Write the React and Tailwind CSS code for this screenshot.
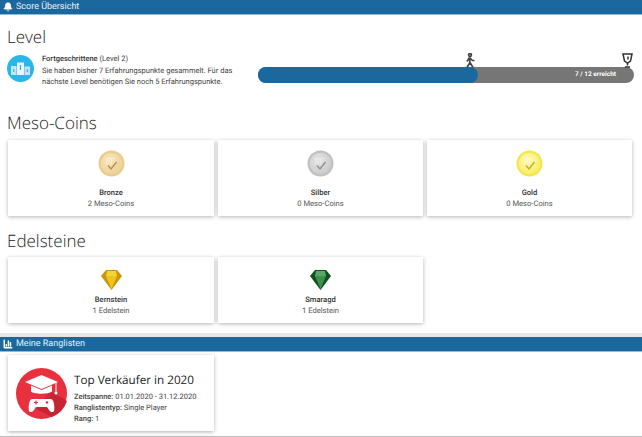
import { Bell, BarChart3 } from 'lucide-react';

const font = "font-['Roboto',sans-serif] [text-rendering:geometricPrecision]";
const heading = "font-['Open_Sans',sans-serif] text-[17px] leading-[26px] font-light text-[#222]";

function SectionBar({ icon, title }) {
  return (
    <div className="h-[15px] flex items-center gap-[3px] pl-[3px] bg-[#1b689f] border-b border-[#8fbbd8] text-[#e8f0f6] text-[9px] leading-none">
      {icon}
      <span className="pt-[1px]">{title}</span>
    </div>
  );
}

function Coin({ from, to, edge, check }) {
  return (
    <svg width="27" height="27" viewBox="0 0 27 27">
      <defs>
        <radialGradient id={`coin-${edge}`} cx="40%" cy="35%" r="75%">
          <stop offset="0%" stopColor={from} />
          <stop offset="100%" stopColor={to} />
        </radialGradient>
      </defs>
      <circle cx="13.500" cy="13.500" r="13" fill={edge} />
      <circle cx="13.500" cy="13.500" r="10.800" fill={`url(#coin-${edge})`} />
      <path d="M8 8.500h9M8.500 8.500v6M11 8.500v6M13.500 8.500v6M16 8.500v6" stroke="#fff" strokeOpacity="0.4" strokeWidth="0.800" fill="none" />
      <path d="M10 15.500l3 3.500 5.500-7" stroke={check} strokeWidth="1.400" fill="none" />
    </svg>
  );
}

function Gem({ light, mid, dark }) {
  return (
    <svg width="21" height="20" viewBox="0 0 21 20">
      <path d="M5 0h11l5 6-10.500 14L0 6z" fill={dark} />
      <path d="M5 6h11l-5.500 13z" fill={mid} />
      <path d="M6 1h9l1 5H5z" fill={light} />
    </svg>
  );
}

function Card({ icon, name, value, h, iconH, gap }) {
  return (
    <div className={`${h} bg-white shadow-[0_1px_4px_rgba(0,0,0,0.3)] flex flex-col items-center`}>
      <div className={`${iconH} flex items-end justify-center`}>{icon}</div>
      <div className={`${gap} text-[7.600px] leading-[11px] font-medium text-[#333]`}>{name}</div>
      <div className="text-[7.600px] leading-[11px] text-[#555]">{value}</div>
    </div>
  );
}

function Walker() {
  return (
    <svg width="10" height="15" viewBox="0 0 10 15" fill="none" stroke="#444" strokeWidth="1.700">
      <circle cx="5" cy="2" r="1.400" />
      <path d="M4.500 4.500L2 8.500M4.500 4.500l3 3h2M4.500 4.500l.5 5-3 5M5 9.500l3 5" />
    </svg>
  );
}

function Trophy() {
  return (
    <svg width="11" height="15" viewBox="0 0 11 15" fill="none" stroke="#333" strokeWidth="1.500">
      <path d="M1 1h9l-1.500 7-3 2-3-2z" />
      <path d="M6 3.500v3" />
      <path d="M5.500 10v2.500M3 14h5" />
    </svg>
  );
}

function Podium() {
  return (
    <svg width="27" height="27" viewBox="0 0 27 27">
      <circle cx="13.500" cy="13.500" r="13.500" fill="#29b6e8" />
      <path d="M10 7.500h7V20h-7z" fill="#e9f7fc" />
      <path d="M4 11h5.500v9H4zM17.500 11.500H23V20h-5.500z" fill="#bfe8f7" />
      <path d="M13.500 10v5M6.700 14v3M20.300 14v3" stroke="#29b6e8" strokeWidth="1.200" />
    </svg>
  );
}

function GameBadge() {
  return (
    <svg width="51" height="51" viewBox="0 0 51 51">
      <circle cx="25.500" cy="25.500" r="25.500" fill="#e8303f" />
      <path d="M34 23l17 10a25.500 25.500 0 0 1-15 16L20 41z" fill="#c42634" />
      <path d="M25.500 7L42 14l-16.500 7L9 14z" fill="#fff" />
      <path d="M15 17.500v6c3 3 17 3 21 0v-6l-10.500 4.500z" fill="#fff" />
      <path d="M16 25.500c4 2 15 2 19 0M17 28.500c4 1.500 13 1.500 17 0" stroke="#e8303f" strokeWidth="1" fill="none" />
      <path d="M40 14.500V24" stroke="#fff" strokeWidth="1" />
      <circle cx="40" cy="25" r="1.500" fill="#fff" />
      <path d="M16 31h19c3 0 4 9 3 12-1 2-4 1-5-1l-2-3H20l-2 3c-1 2-4 3-5 1-1-3 0-12 3-12z" fill="#fff" />
      <path d="M18 34.500h4M20 32.500v4" stroke="#e8303f" strokeWidth="1.200" />
      <circle cx="31" cy="34.500" r="1.300" fill="#e8303f" />
    </svg>
  );
}

export default function App() {
  return (
    <div className={`w-[642px] h-[437px] overflow-hidden bg-white text-[#333] ${font}`}>
      <SectionBar icon={<Bell size={10} fill="#fff" stroke="#fff" />} title="Score Übersicht" />

      <div className="px-[7px] pt-[9px] h-[318px]">
        <h2 className={heading}>Level</h2>
        <div className="mt-[5px] flex items-start">
          <Podium />
          <div className="ml-[8px] -mt-[2px] w-[208px] text-[7.500px] leading-[11.500px] text-[#444]">
            <div><span className="font-medium text-[#333]">Fortgeschrittene</span> (Level 2)</div>
            <div>Sie haben bisher 7 Erfahrungspunkte gesammelt. Für das<br />nächste Level benötigen Sie noch 5 Erfahrungspunkte.</div>
          </div>
          <div className="relative ml-[8px] mt-[12px] w-[376px] h-[16px] rounded-full bg-[#767676]">
            <div className="h-full w-[220px] rounded-full bg-[#1b689f]" />
            <div className="absolute left-[207px] top-[-14px]"><Walker /></div>
            <div className="absolute left-[364px] top-[-14px]"><Trophy /></div>
            <div className="absolute right-[18px] top-0 h-full flex items-center text-[6.500px] font-bold text-white">7 / 12 erreicht</div>
          </div>
        </div>

        <h2 className={`mt-[22.500px] ${heading}`}>Meso-Coins</h2>
        <div className="mt-[4px] ml-[1px] grid grid-cols-[206px_205px_205px] gap-[4px]">
          <Card h="h-[76px]" iconH="h-[37px]" gap="mt-[10px]" name="Bronze" value="2 Meso-Coins" icon={<Coin from="#f8e6bd" to="#eccf92" edge="#e8cb8e" check="#b0924c" />} />
          <Card h="h-[76px]" iconH="h-[37px]" gap="mt-[10px]" name="Silber" value="0 Meso-Coins" icon={<Coin from="#e4e4e4" to="#c8c8c8" edge="#c0c0c0" check="#8f8f8f" />} />
          <Card h="h-[76px]" iconH="h-[37px]" gap="mt-[10px]" name="Gold" value="0 Meso-Coins" icon={<Coin from="#fdf9b8" to="#f7ec5e" edge="#f3e64a" check="#bdb028" />} />
        </div>

        <h2 className={`mt-[12px] ${heading}`}>Edelsteine</h2>
        <div className="mt-[3px] ml-[1px] grid grid-cols-[206px_205px] gap-[4px]">
          <Card h="h-[66px]" iconH="h-[33px]" gap="mt-[4px]" name="Bernstein" value="1 Edelstein" icon={<Gem light="#f3d335" mid="#f0c419" dark="#c9950b" />} />
          <Card h="h-[66px]" iconH="h-[33px]" gap="mt-[4px]" name="Smaragd" value="1 Edelstein" icon={<Gem light="#5aa868" mid="#3f8f4f" dark="#11511f" />} />
        </div>
      </div>

      <div className="h-[4px] bg-[#e6e6e6]" />
      <SectionBar icon={<BarChart3 size={10} stroke="#fff" strokeWidth={3.500} />} title="Meine Ranglisten" />

      <div className="h-[85px] px-[8px] pt-[3px] border-b border-[#bbb]">
        <div className="w-[206px] h-[76px] bg-white shadow-[0_1px_4px_rgba(0,0,0,0.3)] flex items-center pl-[8px]">
          <GameBadge />
          <div className="ml-[7px] pt-[8px]">
            <div className="font-['Open_Sans',sans-serif] text-[11.700px] leading-[18px] text-[#222]">Top Verkäufer in 2020</div>
            <div className="mt-[2px] text-[7.500px] leading-[11px] text-[#444]">
              <div><span className="font-medium">Zeitspanne:</span> 01.01.2020 - 31.12.2020</div>
              <div><span className="font-medium">Ranglistentyp:</span> Single Player</div>
              <div><span className="font-medium">Rang:</span> 1</div>
            </div>
          </div>
        </div>
      </div>
    </div>
  );
}
